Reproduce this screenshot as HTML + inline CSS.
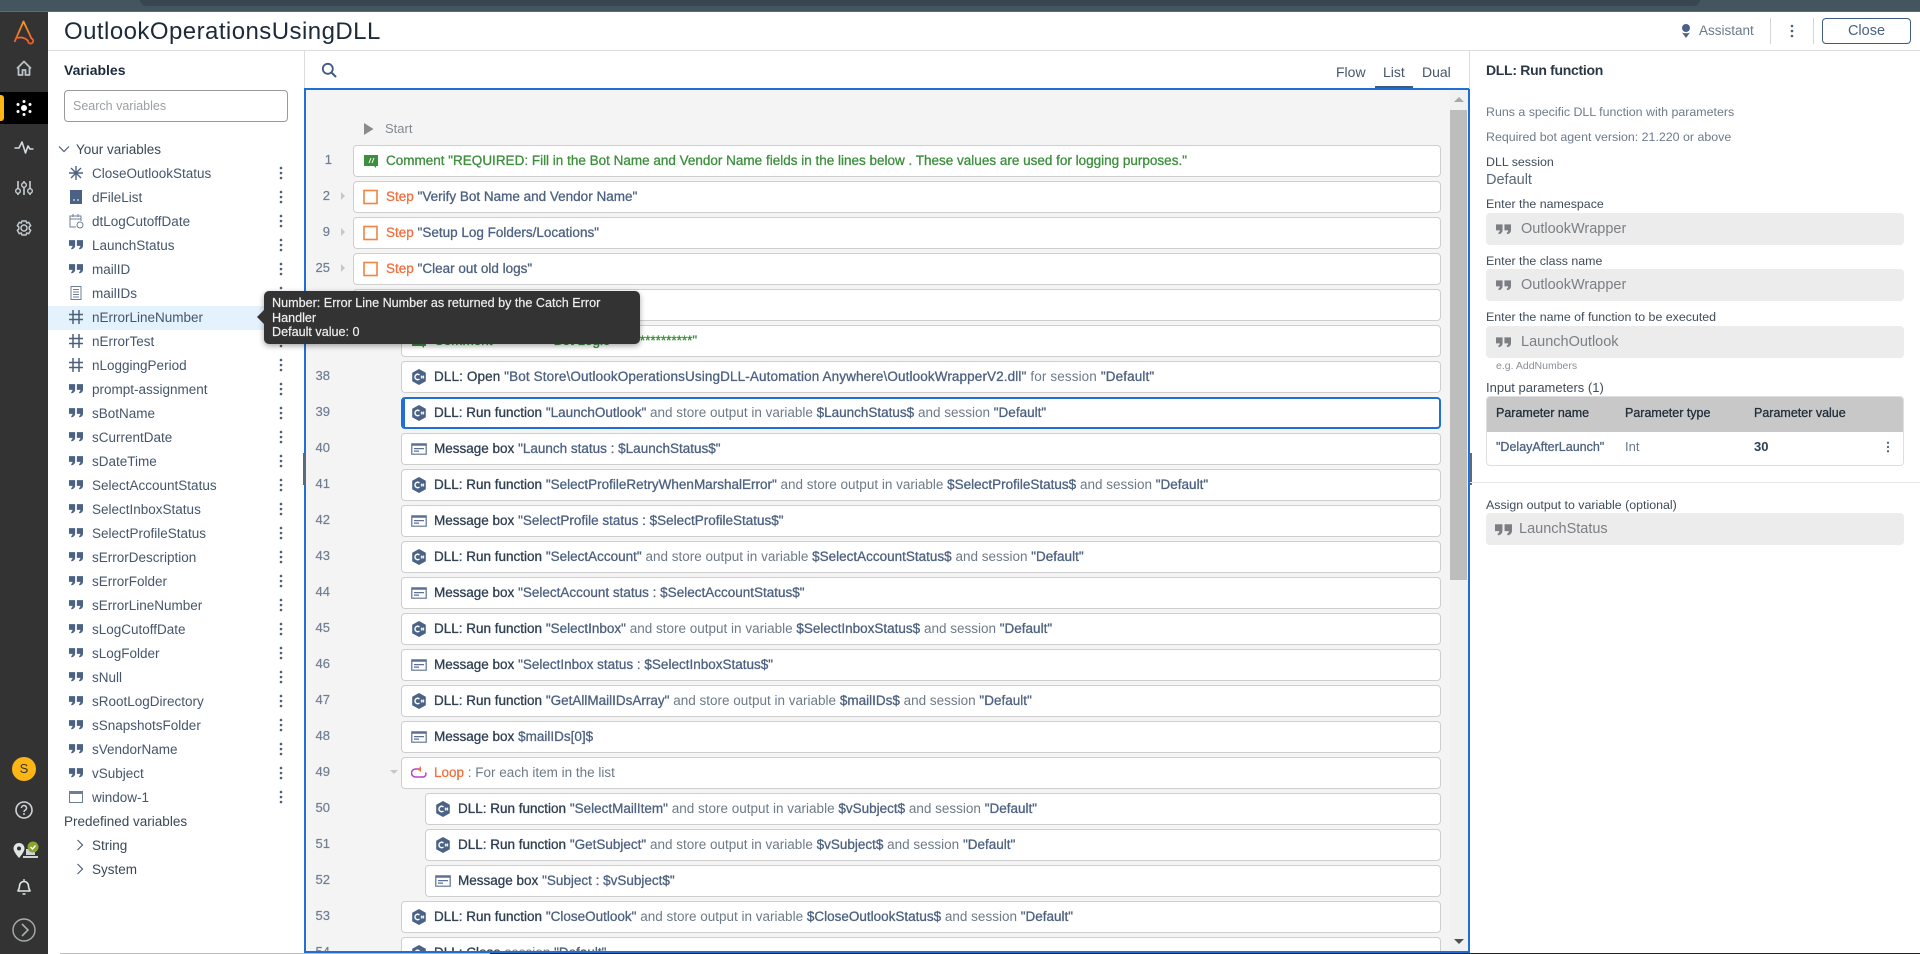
<!DOCTYPE html>
<html><head><meta charset="utf-8"><title>OutlookOperationsUsingDLL</title>
<style>
*{box-sizing:border-box}
html,body{margin:0;padding:0;width:1920px;height:954px;overflow:hidden;background:#fff;font-family:"Liberation Sans",sans-serif;color:#3d4f63}
.a{position:absolute}
.v{position:absolute;left:48px;width:256px;height:24px;line-height:24px;font-size:13.5px;color:#45566a;padding-left:44px;white-space:nowrap;margin-top:1px}
.v svg.i{position:absolute;left:20px;top:3px;width:16px;height:16px}
.v svg.k{position:absolute;left:231px;top:4px;width:4px;height:14px}
.hl{background:#e3f2fd}
.h{position:absolute;height:24px;line-height:24px;font-size:13.5px;color:#3a4856;white-space:nowrap;margin-top:1px}
.n{position:absolute;width:40px;left:290px;text-align:right;font-size:13px;color:#6f7f92;height:16px;line-height:16px;-webkit-text-stroke:.2px #6f7f92}
.c{position:absolute;height:32px;background:#fff;border:1px solid #cfcfcf;border-radius:4px;right:29px;line-height:30px;font-size:13.5px;padding-left:32px;white-space:nowrap;color:#6d7a88}
.c svg{position:absolute;left:9px;top:7px;width:16px;height:16px}
.c b{font-weight:400;color:#2f4052;-webkit-text-stroke:.3px #2f4052}
.c em{font-style:normal;color:#4d6280;-webkit-text-stroke:.3px #4d6280}
.c u{text-decoration:none;color:#f0703f;-webkit-text-stroke:.3px #f0703f}
.c i{font-style:normal;color:#3c8f3c;-webkit-text-stroke:.3px #3c8f3c}
.l1{left:353px}.l2{left:401px}.l3{left:425px}
.sel{border:2px solid #1f6fd6;border-left-width:4px;padding-left:29px;line-height:28px}
.sel svg{left:6px;top:6px}
.tri{position:absolute;left:341px;width:0;height:0;border-left:4px solid #c4c8cc;border-top:4px solid transparent;border-bottom:4px solid transparent}
.lb{position:absolute;left:1486px;font-size:13px;color:#3f4c59;white-space:nowrap;height:16px;line-height:16px}
.inp{position:absolute;left:1486px;width:418px;height:32px;background:#ececec;border-radius:4px;font-size:14.5px;color:#7b7f84;line-height:32px;padding-left:35px}
.inp svg{position:absolute;left:10px;top:10px;width:15px;height:12px}
</style></head>
<body>
<svg width="0" height="0" style="position:absolute"><defs>
<symbol id="q" viewBox="0 0 16 12"><path fill="currentColor" d="M0 1h7v6c0 2.500-1.500 4-4 4.500L2.300 10C3.500 9.500 4 8.800 4 7.500H0zM9 1h7v6c0 2.500-1.500 4-4 4.500L11.300 10c1.200-.5 1.700-1.200 1.700-2.500H9z"/></symbol>
<symbol id="k" viewBox="0 0 4 14"><circle cx="2" cy="2" r="1.300" fill="#4c5f78"/><circle cx="2" cy="7" r="1.300" fill="#4c5f78"/><circle cx="2" cy="12" r="1.300" fill="#4c5f78"/></symbol>
<symbol id="hash" viewBox="0 0 16 16"><path fill="none" stroke="#4c5f78" stroke-width="1.500" d="M5 1v14M11 1v14M1 5.500h14M1 10.500h14"/></symbol>
<symbol id="dll" viewBox="0 0 16 16"><path fill="#4a6285" d="M8 0l6.800 3.800v8.400L8 16l-6.800-3.800V3.800z"/><path fill="none" stroke="#fff" stroke-width="1.500" d="M8.500 6a2.700 2.700 0 1 0 0 4"/><path stroke="#fff" stroke-width=".8" d="M10.500 6.500v3M12.500 6.500v3M9.800 7.300h3.400M9.800 8.800h3.400"/></symbol>
<symbol id="msg" viewBox="0 0 16 16"><path fill="none" stroke="#5a7191" stroke-width="1.200" d="M.8 2.800h14.400v10.400H.8z"/><path fill="#5a7191" d="M.8 2.800h14.400v2H.8zM3 7h10v1.200H3zM3 9.500h5v1.200H3z"/></symbol>
<symbol id="step" viewBox="0 0 16 16"><rect x="1" y="1.500" width="13" height="13" fill="none" stroke="#f2843f" stroke-width="1.600"/></symbol>
<symbol id="cm" viewBox="0 0 16 16"><path fill="#3c8f3c" d="M1 2h14v11h-2v2l-2-2H1z"/><path stroke="#fff" stroke-width="1" d="M6 10l2-5M9 10l2-5"/></symbol>
</defs></svg>

<!-- browser strip -->
<div class="a" style="left:0;top:0;width:1920px;height:12px;background:#43565f"></div>
<div class="a" style="left:140px;top:0;width:1560px;height:6px;background:#38474f;border-radius:0 0 8px 8px"></div>
<div class="a" style="left:0;top:11px;width:1920px;height:1px;background:#5c6d75"></div>

<!-- sidebar -->
<div class="a" style="left:0;top:12px;width:48px;height:942px;background:#333"></div>
<div class="a" style="left:0;top:92px;width:48px;height:32px;background:#000"></div>
<div class="a" style="left:0;top:95px;width:4px;height:26px;background:#fdb515;border-radius:0 3px 3px 0"></div>
<svg class="a" style="left:0;top:12px" width="48" height="942" viewBox="0 12 48 942" fill="none">
<defs><linearGradient id="g" x1="0" y1="0" x2="0" y2="1"><stop offset="0" stop-color="#f59a23"/><stop offset="1" stop-color="#ef5a28"/></linearGradient></defs>
<path d="M14.500 42 L23.500 21.500 L31.500 38.500 a2.600 2.600 0 1 1 -3.500 2.500 C25 37.500 21 37 17.500 38" stroke="url(#g)" stroke-width="1.800" stroke-linejoin="round"/>
<path d="M17 68.500 L24 61.500 L31 68.500 M18.500 67.500 V75 h4 v-5 h3 v5 h4 v-7.500" stroke="#b9c3c8" stroke-width="1.800" stroke-linejoin="round"/>
<g fill="#fff"><circle cx="24" cy="108" r="3"/><circle cx="24" cy="101.500" r="1.500"/><circle cx="24" cy="114.500" r="1.500"/><circle cx="18" cy="104.500" r="1.500"/><circle cx="30" cy="104.500" r="1.500"/><circle cx="18" cy="111.500" r="1.500"/><circle cx="30" cy="111.500" r="1.500"/></g>
<path d="M14.500 148 H19 L22 142 L25.500 153 L28 146 L30 149 H33.500" stroke="#d5dadc" stroke-width="1.600" stroke-linejoin="round"/>
<path d="M18 181v14M24 181v14M30 181v14" stroke="#c9d0d3" stroke-width="1.600"/><circle cx="18" cy="191" r="2.300" fill="#333" stroke="#c9d0d3" stroke-width="1.400"/><circle cx="24" cy="185" r="2.300" fill="#333" stroke="#c9d0d3" stroke-width="1.400"/><circle cx="30" cy="191" r="2.300" fill="#333" stroke="#c9d0d3" stroke-width="1.400"/>
<circle cx="24" cy="228" r="3" stroke="#c3cbcf" stroke-width="1.500"/><path d="M22 221h4l.7 2 2-.7 2 3.400-1.500 1.300v2l1.500 1.300-2 3.400-2-.7-.7 2h-4l-.7-2-2 .7-2-3.400 1.500-1.300v-2l-1.500-1.300 2-3.400 2 .7z" stroke="#c3cbcf" stroke-width="1.500" stroke-linejoin="round"/>
<circle cx="24" cy="769" r="12" fill="#fdb515"/>
<circle cx="24" cy="810" r="8" stroke="#cfd4d6" stroke-width="1.600"/><path d="M21.500 808a2.500 2.500 0 1 1 3.500 2.300c-.7.4-1 .8-1 1.700" stroke="#cfd4d6" stroke-width="1.500"/><circle cx="24" cy="814" r="1" fill="#cfd4d6"/>
<path fill="#e3e6e7" d="M19 843a5.500 5.500 0 0 1 5.500 5.500c0 3.500-5.500 9.500-5.500 9.500s-5.500-6-5.500-9.500A5.500 5.500 0 0 1 19 843z"/><circle cx="19" cy="848.500" r="2" fill="#333"/>
<path fill="#cfd4d6" d="M26 849h9v6h-9zM23 856h15v2H23z"/>
<circle cx="33" cy="847" r="5.500" fill="#8ba52f"/><path d="M30.500 847l2 2 3-3.500" stroke="#fff" stroke-width="1.400"/>
<path d="M18 891c0-1 1.500-1.500 1.500-5a4.500 4.500 0 0 1 9 0c0 3.500 1.500 4 1.500 5z M22.500 894h3" stroke="#e2e5e6" stroke-width="1.600" stroke-linejoin="round"/><path d="M24 879v2" stroke="#e2e5e6" stroke-width="1.400"/>
<circle cx="24" cy="930" r="11" stroke="#a8adaf" stroke-width="1.400"/><path d="M22 924l6 6-6 6" stroke="#a8adaf" stroke-width="1.600"/>
</svg>
<div class="a" style="left:12px;top:757px;width:24px;height:24px;line-height:24px;text-align:center;font-size:13px;color:#333">S</div>

<!-- header -->
<div class="a" style="left:64px;top:17px;height:30px;line-height:30px;font-size:24px;letter-spacing:.45px;color:#1d2a3a;white-space:nowrap">OutlookOperationsUsingDLL</div>
<div class="a" style="left:48px;top:50px;width:1872px;height:1px;background:#ddd"></div>
<svg class="a" style="left:1681px;top:23px" width="10" height="16" viewBox="0 0 10 16"><circle cx="5" cy="5" r="4" fill="#4a6285"/><path d="M1 9.500c2 1 6 1 8 0L5 15z" fill="#4a6285"/></svg>
<div class="a" style="left:1699px;top:22px;line-height:18px;font-size:13.5px;color:#6a7a8c">Assistant</div>
<div class="a" style="left:1770px;top:18px;width:1px;height:26px;background:#d4d4d4"></div>
<svg class="a" style="left:1790px;top:24px" width="4" height="14"><use href="#k"/></svg>
<div class="a" style="left:1813px;top:18px;width:1px;height:26px;background:#d4d4d4"></div>
<div class="a" style="left:1822px;top:18px;width:89px;height:26px;border:1px solid #3f5c80;border-radius:4px;text-align:center;line-height:25px;font-size:14.5px;color:#4a6285">Close</div>

<!-- variables panel -->
<div class="a" style="left:64px;top:61px;line-height:18px;font-size:14px;font-weight:700;color:#1d2a3a">Variables</div>
<div class="a" style="left:64px;top:90px;width:224px;height:32px;border:1px solid #9a9a9a;border-radius:4px;font-size:12.5px;line-height:30px;color:#9aa0a6;padding-left:8px">Search variables</div>
<svg class="a" style="left:58px;top:145px" width="12" height="8" viewBox="0 0 12 8"><path d="M1 1.500l5 5 5-5" fill="none" stroke="#4c5f78" stroke-width="1.200"/></svg>
<div class="h" style="left:76px;top:137px">Your variables</div>

<div class="a hl" style="left:48px;top:306px;width:256px;height:24px"></div>

<div class="v" style="top:161px"><svg class="i" viewBox="0 0 16 16"><path d="M8 1v14M1 8h14M3 3l10 10M13 3L3 13" stroke="#4c6484" stroke-width="1.400"/></svg>CloseOutlookStatus<svg class="k"><use href="#k"/></svg></div>
<div class="v" style="top:185px"><svg class="i" viewBox="0 0 16 16"><path fill="#4a6285" d="M2 1h12v14H2z"/><path stroke="#fff" d="M5 11h2M9 11h2"/></svg>dFileList<svg class="k"><use href="#k"/></svg></div>
<div class="v" style="top:209px"><svg class="i" viewBox="0 0 16 16" fill="none" stroke="#6c7f97"><path d="M8 14H2V3h11v5M2 6h11M5 1v3M10 1v3"/><circle cx="12" cy="12" r="3"/></svg>dtLogCutoffDate<svg class="k"><use href="#k"/></svg></div>
<div class="v" style="top:233px"><svg class="i" style="color:#4a6285"><use href="#q" width="14" height="11" x="1" y="2"/></svg>LaunchStatus<svg class="k"><use href="#k"/></svg></div>
<div class="v" style="top:257px"><svg class="i" style="color:#4a6285"><use href="#q" width="14" height="11" x="1" y="2"/></svg>mailID<svg class="k"><use href="#k"/></svg></div>
<div class="v" style="top:281px"><svg class="i" viewBox="0 0 16 16" fill="none" stroke="#6c7f97"><path d="M3 1.500h10v13H3zM5 4.500h6M5 7h6M5 9.500h6M5 12h6"/></svg>mailIDs<svg class="k"><use href="#k"/></svg></div>
<div class="v" style="top:305px"><svg class="i"><use href="#hash"/></svg>nErrorLineNumber</div>
<div class="v" style="top:329px"><svg class="i"><use href="#hash"/></svg>nErrorTest<svg class="k"><use href="#k"/></svg></div>
<div class="v" style="top:353px"><svg class="i"><use href="#hash"/></svg>nLoggingPeriod<svg class="k"><use href="#k"/></svg></div>
<div class="v" style="top:377px"><svg class="i" style="color:#4a6285"><use href="#q" width="14" height="11" x="1" y="2"/></svg>prompt-assignment<svg class="k"><use href="#k"/></svg></div>
<div class="v" style="top:401px"><svg class="i" style="color:#4a6285"><use href="#q" width="14" height="11" x="1" y="2"/></svg>sBotName<svg class="k"><use href="#k"/></svg></div>
<div class="v" style="top:425px"><svg class="i" style="color:#4a6285"><use href="#q" width="14" height="11" x="1" y="2"/></svg>sCurrentDate<svg class="k"><use href="#k"/></svg></div>
<div class="v" style="top:449px"><svg class="i" style="color:#4a6285"><use href="#q" width="14" height="11" x="1" y="2"/></svg>sDateTime<svg class="k"><use href="#k"/></svg></div>
<div class="v" style="top:473px"><svg class="i" style="color:#4a6285"><use href="#q" width="14" height="11" x="1" y="2"/></svg>SelectAccountStatus<svg class="k"><use href="#k"/></svg></div>
<div class="v" style="top:497px"><svg class="i" style="color:#4a6285"><use href="#q" width="14" height="11" x="1" y="2"/></svg>SelectInboxStatus<svg class="k"><use href="#k"/></svg></div>
<div class="v" style="top:521px"><svg class="i" style="color:#4a6285"><use href="#q" width="14" height="11" x="1" y="2"/></svg>SelectProfileStatus<svg class="k"><use href="#k"/></svg></div>
<div class="v" style="top:545px"><svg class="i" style="color:#4a6285"><use href="#q" width="14" height="11" x="1" y="2"/></svg>sErrorDescription<svg class="k"><use href="#k"/></svg></div>
<div class="v" style="top:569px"><svg class="i" style="color:#4a6285"><use href="#q" width="14" height="11" x="1" y="2"/></svg>sErrorFolder<svg class="k"><use href="#k"/></svg></div>
<div class="v" style="top:593px"><svg class="i" style="color:#4a6285"><use href="#q" width="14" height="11" x="1" y="2"/></svg>sErrorLineNumber<svg class="k"><use href="#k"/></svg></div>
<div class="v" style="top:617px"><svg class="i" style="color:#4a6285"><use href="#q" width="14" height="11" x="1" y="2"/></svg>sLogCutoffDate<svg class="k"><use href="#k"/></svg></div>
<div class="v" style="top:641px"><svg class="i" style="color:#4a6285"><use href="#q" width="14" height="11" x="1" y="2"/></svg>sLogFolder<svg class="k"><use href="#k"/></svg></div>
<div class="v" style="top:665px"><svg class="i" style="color:#4a6285"><use href="#q" width="14" height="11" x="1" y="2"/></svg>sNull<svg class="k"><use href="#k"/></svg></div>
<div class="v" style="top:689px"><svg class="i" style="color:#4a6285"><use href="#q" width="14" height="11" x="1" y="2"/></svg>sRootLogDirectory<svg class="k"><use href="#k"/></svg></div>
<div class="v" style="top:713px"><svg class="i" style="color:#4a6285"><use href="#q" width="14" height="11" x="1" y="2"/></svg>sSnapshotsFolder<svg class="k"><use href="#k"/></svg></div>
<div class="v" style="top:737px"><svg class="i" style="color:#4a6285"><use href="#q" width="14" height="11" x="1" y="2"/></svg>sVendorName<svg class="k"><use href="#k"/></svg></div>
<div class="v" style="top:761px"><svg class="i" style="color:#4a6285"><use href="#q" width="14" height="11" x="1" y="2"/></svg>vSubject<svg class="k"><use href="#k"/></svg></div>
<div class="v" style="top:785px"><svg class="i" viewBox="0 0 16 16" fill="none" stroke="#6c7f97"><path d="M1.500 2.500h13v11h-13z"/><path d="M1.500 4h13" stroke-width="2"/></svg>window-1<svg class="k"><use href="#k"/></svg></div>

<div class="h" style="left:64px;top:809px">Predefined variables</div>
<svg class="a" style="left:76px;top:839px" width="8" height="12" viewBox="0 0 8 12"><path d="M1.500 1l5 5-5 5" fill="none" stroke="#4c5f78" stroke-width="1.200"/></svg>
<div class="h" style="left:92px;top:833px">String</div>
<svg class="a" style="left:76px;top:863px" width="8" height="12" viewBox="0 0 8 12"><path d="M1.500 1l5 5-5 5" fill="none" stroke="#4c5f78" stroke-width="1.200"/></svg>
<div class="h" style="left:92px;top:857px">System</div>

<!-- editor toolbar -->
<div class="a" style="left:304px;top:51px;width:1px;height:38px;background:#ddd"></div>
<svg class="a" style="left:321px;top:62px" width="16" height="16" viewBox="0 0 16 16" fill="none"><circle cx="6.800" cy="6.800" r="5" stroke="#3f5c80" stroke-width="1.800"/><path d="M10.500 10.500L15 15" stroke="#3f5c80" stroke-width="2"/></svg>
<div class="a" style="left:1336px;top:63px;line-height:18px;font-size:14px;color:#45566a">Flow</div>
<div class="a" style="left:1383px;top:63px;line-height:18px;font-size:14px;color:#45566a">List</div>
<div class="a" style="left:1422px;top:63px;line-height:18px;font-size:14px;color:#45566a">Dual</div>
<div class="a" style="left:1375px;top:86px;width:38px;height:2px;background:#3f5c80"></div>

<!-- editor -->
<div class="a" style="left:0;top:0;width:1470px;height:952px;overflow:hidden">
<div class="a" style="left:306px;top:90px;width:1162px;height:862px;background:#f4f4f4"></div>
<div class="a" style="left:1450px;top:90px;width:18px;height:862px;background:#f1f1f1"></div>
<div class="a" style="left:1450px;top:110px;width:17px;height:470px;background:#bdbdbd"></div>
<div class="a" style="left:1454px;top:97px;width:0;height:0;border-left:5px solid transparent;border-right:5px solid transparent;border-bottom:5px solid #a8a8a8"></div>
<div class="a" style="left:1454px;top:939px;width:0;height:0;border-left:5px solid transparent;border-right:5px solid transparent;border-top:5px solid #505050"></div>

<svg class="a" style="left:364px;top:123px" width="10" height="12"><path d="M0 0l9.500 6L0 12z" fill="#8b8b8b"/></svg>
<div class="a" style="left:385px;top:120px;line-height:18px;font-size:13px;color:#858a90">Start</div>

<div class="n" style="top:152px;left:292px">1</div><div class="c l1" style="top:145px"><svg><use href="#cm"/></svg><i>Comment "REQUIRED: Fill in the Bot Name and Vendor Name fields in the lines below . These values are used for logging purposes."</i></div>
<div class="n" style="top:188px;left:290px">2</div><div class="tri" style="top:192px"></div><div class="c l1" style="top:181px"><svg><use href="#step"/></svg><u>Step</u> <em>"Verify Bot Name and Vendor Name"</em></div>
<div class="n" style="top:224px;left:290px">9</div><div class="tri" style="top:228px"></div><div class="c l1" style="top:217px"><svg><use href="#step"/></svg><u>Step</u> <em>"Setup Log Folders/Locations"</em></div>
<div class="n" style="top:260px;left:290px">25</div><div class="tri" style="top:264px"></div><div class="c l1" style="top:253px"><svg><use href="#step"/></svg><u>Step</u> <em>"Clear out old logs"</em></div>
<div class="c l1" style="top:289px"></div>
<div class="c l2" style="top:325px"><svg><use href="#cm"/></svg><i>Comment</i><span style="display:inline-block;width:61px"></span><i>Bot Logic ***************"</i></div>
<div class="n" style="top:368px">38</div><div class="c l2" style="top:361px;letter-spacing:.12px"><svg><use href="#dll"/></svg><b>DLL: Open</b> <em>"Bot Store\OutlookOperationsUsingDLL-Automation Anywhere\OutlookWrapperV2.dll"</em> for session <em>"Default"</em></div>
<div class="n" style="top:404px">39</div><div class="c l2 sel" style="top:397px"><svg><use href="#dll"/></svg><b>DLL: Run function</b> <em>"LaunchOutlook"</em> and store output in variable <em>$LaunchStatus$</em> and session <em>"Default"</em></div>
<div class="n" style="top:440px">40</div><div class="c l2" style="top:433px"><svg><use href="#msg"/></svg><b>Message box</b> <em>"Launch status : $LaunchStatus$"</em></div>
<div class="n" style="top:476px">41</div><div class="c l2" style="top:469px"><svg><use href="#dll"/></svg><b>DLL: Run function</b> <em>"SelectProfileRetryWhenMarshalError"</em> and store output in variable <em>$SelectProfileStatus$</em> and session <em>"Default"</em></div>
<div class="n" style="top:512px">42</div><div class="c l2" style="top:505px"><svg><use href="#msg"/></svg><b>Message box</b> <em>"SelectProfile status : $SelectProfileStatus$"</em></div>
<div class="n" style="top:548px">43</div><div class="c l2" style="top:541px"><svg><use href="#dll"/></svg><b>DLL: Run function</b> <em>"SelectAccount"</em> and store output in variable <em>$SelectAccountStatus$</em> and session <em>"Default"</em></div>
<div class="n" style="top:584px">44</div><div class="c l2" style="top:577px"><svg><use href="#msg"/></svg><b>Message box</b> <em>"SelectAccount status : $SelectAccountStatus$"</em></div>
<div class="n" style="top:620px">45</div><div class="c l2" style="top:613px"><svg><use href="#dll"/></svg><b>DLL: Run function</b> <em>"SelectInbox"</em> and store output in variable <em>$SelectInboxStatus$</em> and session <em>"Default"</em></div>
<div class="n" style="top:656px">46</div><div class="c l2" style="top:649px"><svg><use href="#msg"/></svg><b>Message box</b> <em>"SelectInbox status : $SelectInboxStatus$"</em></div>
<div class="n" style="top:692px">47</div><div class="c l2" style="top:685px"><svg><use href="#dll"/></svg><b>DLL: Run function</b> <em>"GetAllMailIDsArray"</em> and store output in variable <em>$mailIDs$</em> and session <em>"Default"</em></div>
<div class="n" style="top:728px">48</div><div class="c l2" style="top:721px"><svg><use href="#msg"/></svg><b>Message box</b> <em>$mailIDs[0]$</em></div>
<div class="n" style="top:764px">49</div><div class="a" style="left:390px;top:770px;width:0;height:0;border-left:4px solid transparent;border-right:4px solid transparent;border-top:4px solid #c4c8cc"></div><div class="c l2" style="top:757px"><svg viewBox="0 0 16 16" fill="none"><path d="M9 4H4.500a3.500 3.500 0 0 0 0 8H12a3 3 0 0 0 2.500-4.500" stroke="#b93fd0" stroke-width="1.500"/><path d="M10 1L6.500 4.500 10 7z" fill="#f0703f"/></svg><u>Loop</u> : For each item in the list</div>
<div class="n" style="top:800px">50</div><div class="c l3" style="top:793px"><svg><use href="#dll"/></svg><b>DLL: Run function</b> <em>"SelectMailItem"</em> and store output in variable <em>$vSubject$</em> and session <em>"Default"</em></div>
<div class="n" style="top:836px">51</div><div class="c l3" style="top:829px"><svg><use href="#dll"/></svg><b>DLL: Run function</b> <em>"GetSubject"</em> and store output in variable <em>$vSubject$</em> and session <em>"Default"</em></div>
<div class="n" style="top:872px">52</div><div class="c l3" style="top:865px"><svg><use href="#msg"/></svg><b>Message box</b> <em>"Subject : $vSubject$"</em></div>
<div class="n" style="top:908px">53</div><div class="c l2" style="top:901px"><svg><use href="#dll"/></svg><b>DLL: Run function</b> <em>"CloseOutlook"</em> and store output in variable <em>$CloseOutlookStatus$</em> and session <em>"Default"</em></div>
<div class="n" style="top:944px">54</div><div class="c l2" style="top:937px"><svg><use href="#dll"/></svg><b>DLL: Close</b> session <em>"Default"</em></div>
</div>
<!-- blue frame -->
<div class="a" style="left:304px;top:88px;width:1166px;height:865px;border:2px solid #1f6fd6;pointer-events:none"></div>
<div class="a" style="left:303px;top:453px;width:3px;height:32px;background:#5b6b7f"></div>
<div class="a" style="left:1469px;top:453px;width:3px;height:32px;background:#5b6b7f"></div>
<div class="a" style="left:1469px;top:51px;width:1px;height:38px;background:#ddd"></div>

<!-- right panel -->
<div class="a" style="left:1486px;top:61px;line-height:18px;font-size:14px;font-weight:700;color:#2a3846;letter-spacing:-.3px">DLL: Run function</div>
<div class="lb" style="top:104px;font-size:12.4px;color:#6e7b89">Runs a specific DLL function with parameters</div>
<div class="lb" style="top:129px;font-size:12.4px;color:#6e7b89">Required bot agent version: 21.220 or above</div>
<div class="lb" style="top:154px;font-size:12.4px">DLL session</div>
<div class="lb" style="top:172px;font-size:14.5px;color:#5a6774">Default</div>
<div class="lb" style="top:196px;font-size:12.4px">Enter the namespace</div>
<div class="inp" style="top:213px"><svg style="color:#7b7f84"><use href="#q" width="15" height="12"/></svg>OutlookWrapper</div>
<div class="lb" style="top:253px;font-size:12.4px">Enter the class name</div>
<div class="inp" style="top:269px"><svg style="color:#7b7f84"><use href="#q" width="15" height="12"/></svg>OutlookWrapper</div>
<div class="lb" style="top:309px;font-size:12.4px">Enter the name of function to be executed</div>
<div class="inp" style="top:326px"><svg style="color:#7b7f84"><use href="#q" width="15" height="12"/></svg>LaunchOutlook</div>
<div class="lb" style="left:1496px;top:358px;font-size:10.5px;color:#8a9097">e.g. AddNumbers</div>
<div class="lb" style="top:380px;font-size:13px">Input parameters (1)</div>
<div class="a" style="left:1486px;top:396px;width:418px;height:70px;border:1px solid #dedede;border-radius:4px;background:#fff;overflow:hidden">
<div style="height:35px;background:#c8c8c8"></div></div>
<div class="lb" style="left:1496px;top:405px;font-size:12.5px;color:#222e3a;-webkit-text-stroke:.3px #222e3a">Parameter name</div>
<div class="lb" style="left:1625px;top:405px;font-size:12.5px;color:#222e3a;-webkit-text-stroke:.3px #222e3a">Parameter type</div>
<div class="lb" style="left:1754px;top:405px;font-size:12.5px;color:#222e3a;-webkit-text-stroke:.3px #222e3a">Parameter value</div>
<div class="lb" style="left:1496px;top:439px;font-size:12.5px;color:#4d6280;-webkit-text-stroke:.3px #4d6280">"DelayAfterLaunch"</div>
<div class="lb" style="left:1625px;top:439px;font-size:13px;color:#6e7b89">Int</div>
<div class="lb" style="left:1754px;top:439px;font-size:13px;color:#2f4052;font-weight:700">30</div>
<svg class="a" style="left:1886px;top:441px" width="4" height="12"><use href="#k" width="4" height="12"/></svg>
<div class="a" style="left:1470px;top:482px;width:450px;height:1px;background:#e8e8e8"></div>
<div class="lb" style="top:497px;font-size:12.4px">Assign output to variable (optional)</div>
<div class="inp" style="top:513px;padding-left:33px"><svg style="color:#7b7f84;left:9px;width:17px;height:13px"><use href="#q" width="17" height="13"/></svg>LaunchStatus</div>

<!-- tooltip -->
<div class="a" style="left:264px;top:291px;width:376px;height:53px;background:#333;border-radius:5px;box-shadow:0 2px 6px rgba(0,0,0,.35);color:#eee;font-size:12.6px;line-height:14.500px;padding:5px 8px;-webkit-text-stroke:.2px #eee">Number: Error Line Number as returned by the Catch Error Handler<br>Default value: 0</div>
<div class="a" style="left:257px;top:310px;width:0;height:0;border-right:7px solid #333;border-top:7px solid transparent;border-bottom:7px solid transparent"></div>

<!-- bottom edge -->
<div class="a" style="left:60px;top:953px;width:430px;height:1px;background:#bbb"></div>
<div class="a" style="left:490px;top:953px;width:1430px;height:1px;background:#222"></div>
</body></html>
